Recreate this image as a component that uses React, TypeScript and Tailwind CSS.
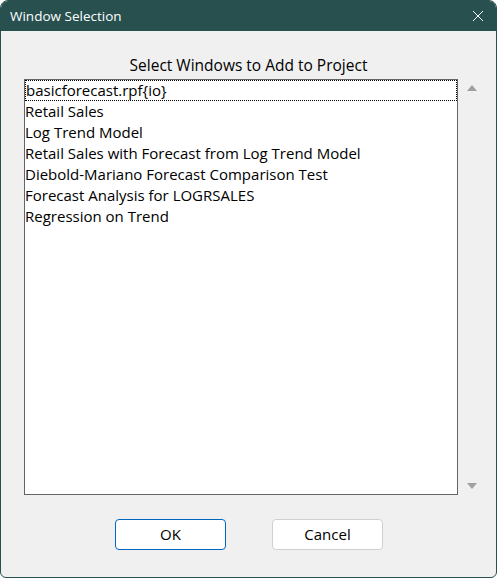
import React from 'react';

const windows = [
  'basicforecast.rpf{io}',
  'Retail Sales',
  'Log Trend Model',
  'Retail Sales with Forecast from Log Trend Model',
  'Diebold-Mariano Forecast Comparison Test',
  'Forecast Analysis for LOGRSALES',
  'Regression on Trend',
];

const App: React.FC = () => {
  return (
    <div className="h-[578px] w-[497px] overflow-hidden bg-white">
      <div className="flex h-full flex-col overflow-hidden rounded-t-[8px] rounded-b-[6px] border border-[#27504f] bg-[#f0f0f0]">
        {/* Title bar */}
        <div className="flex h-[30px] shrink-0 items-center justify-between bg-[#27504f] pl-[9px] pr-[12px] text-white">
          <span className="font-['Open_Sans',sans-serif] text-[13.5px]">Window Selection</span>
          <svg width="12" height="12" viewBox="0 0 12 12" className="mt-[-1px]">
            <path d="M1 1 L11 11 M11 1 L1 11" stroke="#ffffff" strokeWidth="1" />
          </svg>
        </div>

        {/* Body */}
        <div className="flex flex-1 flex-col font-['Open_Sans',sans-serif]">
          <div className="mt-[22px] text-center text-[15.5px] leading-[24px] text-black">
            Select Windows to Add to Project
          </div>

          <div className="ml-[23px] mt-[2px] flex">
            <div className="h-[416px] w-[434px] border border-[#646464] bg-white">
              {windows.map((w, i) => (
                <div
                  key={w}
                  className={
                    i === 0
                      ? 'h-[21px] border border-dotted border-black text-[15px] leading-[19px] text-black'
                      : 'h-[21px] text-[15px] leading-[21px] text-black'
                  }
                >
                  {w}
                </div>
              ))}
            </div>
            <div className="flex w-[28px] flex-col items-center justify-between pb-[6px] pt-[6px]">
              <svg width="10" height="6" viewBox="0 0 10 6">
                <path d="M0 6 L5 0 L10 6 Z" fill="#a0a0a0" />
              </svg>
              <svg width="10" height="6" viewBox="0 0 10 6">
                <path d="M0 0 L5 6 L10 0 Z" fill="#a0a0a0" />
              </svg>
            </div>
          </div>

          <div className="mt-[24px] flex justify-center gap-[46px] pl-[1px]">
            <button className="h-[31px] w-[111px] rounded-[4px] border border-[#0067c0] bg-white text-[15px] text-black">
              OK
            </button>
            <button className="h-[31px] w-[111px] rounded-[4px] border border-[#d0d0d0] bg-white text-[15px] text-black">
              Cancel
            </button>
          </div>
        </div>
      </div>
    </div>
  );
};

export default App;
